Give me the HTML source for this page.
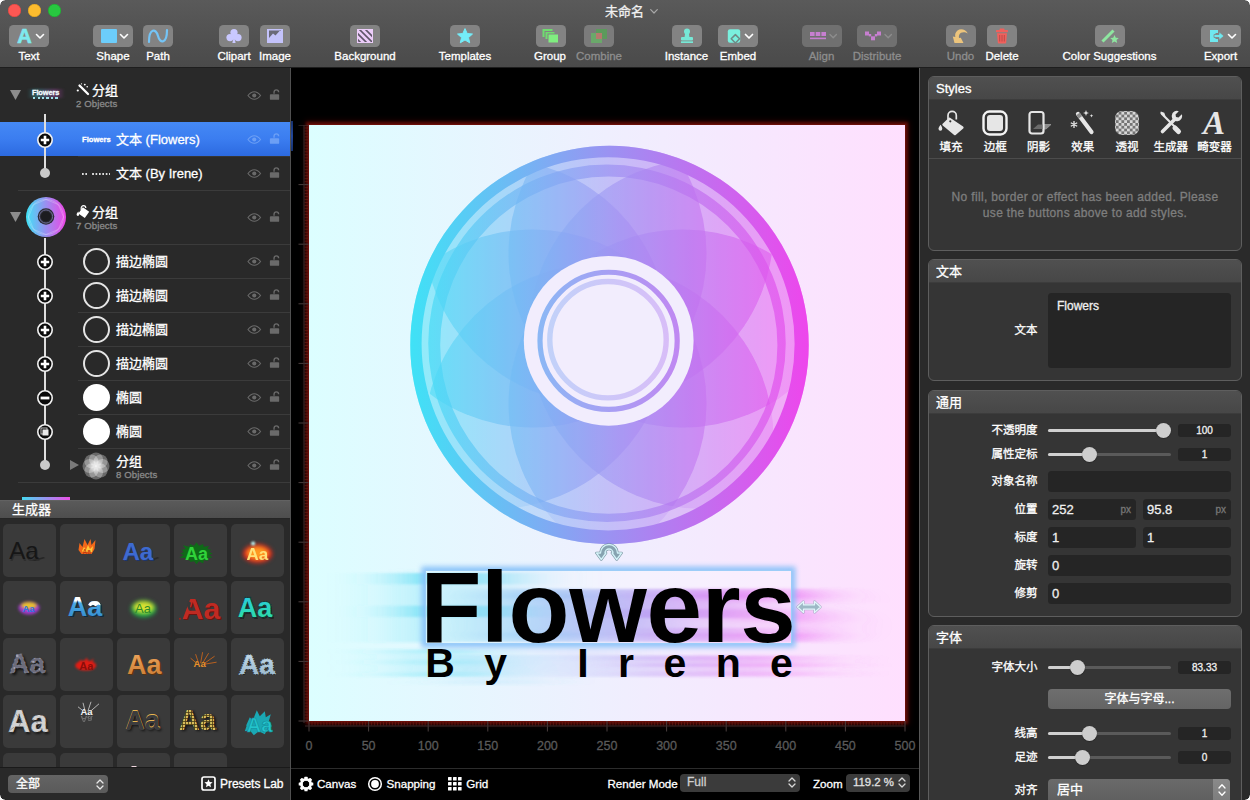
<!DOCTYPE html>
<html lang="zh">
<head>
<meta charset="utf-8">
<title>未命名</title>
<style>
*{box-sizing:border-box;margin:0;padding:0}
html,body{width:1250px;height:800px;overflow:hidden;background:#2a2a2a}
body{font-family:"Liberation Sans","Noto Sans CJK SC",sans-serif;color:#fff;font-size:12px;position:relative;-webkit-font-smoothing:antialiased;-webkit-text-stroke-width:.3px}
.abs{position:absolute}
/* ---------- toolbar ---------- */
#tb{position:absolute;left:0;top:0;width:1250px;height:68px;background:linear-gradient(#5a5a5a,#545454 35%,#4a4a4a);border-bottom:1px solid #1e1e1e}
.tl{position:absolute;top:4.400px;width:13px;height:13px;border-radius:50%}.cnr{position:absolute;width:5px;height:5px;z-index:50}
#title{position:absolute;left:605px;top:3px;font-size:13px;color:#f0f0f0;line-height:18px;white-space:nowrap}
.tbtn{position:absolute;top:25px;height:22px;border-radius:4.500px;background:#838383}
.tlab{position:absolute;top:49px;width:120px;margin-left:-60px;text-align:center;font-size:11.5px;line-height:14px;color:#fff;white-space:nowrap}
.tlab.dim{color:#8e8e8e}
.tbtn.dim{background:#707070}
/* ---------- left ---------- */
#left{position:absolute;left:0;top:68px;width:290px;height:732px;background:#292929;overflow:hidden}
#lsep{position:absolute;left:290px;top:68px;width:1px;height:732px;background:#505050}
/* ---------- canvas ---------- */
#cv{position:absolute;left:291px;top:68px;width:628px;height:732px;background:#000;overflow:hidden}
#rsep{position:absolute;left:919px;top:68px;width:1px;height:732px;background:#585858}
/* ---------- right ---------- */
#right{position:absolute;left:920px;top:68px;width:330px;height:732px;background:#2a2a2a;overflow:hidden}
.panel{position:absolute;left:8px;width:314px;background:#353535;border:1px solid #5e5e5e;border-radius:6px;overflow:hidden}
.phead{position:absolute;left:0;top:0;right:0;height:23px;background:linear-gradient(#505050,#474747);border-bottom:1px solid #3c3c3c;padding-left:7px;font-size:13px;line-height:23px;color:#fff}
</style>
</head>
<body>
<div id="tb">
  <div class="tl" style="left:7.500px;background:#fc5753;box-shadow:inset 0 0 0 .5px #d9463f"></div>
  <div class="tl" style="left:27.500px;background:#fdbc2e;box-shadow:inset 0 0 0 .5px #d99e20"></div>
  <div class="tl" style="left:47.500px;background:#28c840;box-shadow:inset 0 0 0 .5px #1ea530"></div>
  <div id="title">未命名</div><svg class="abs" style="left:649.500px;top:8.500px" width="8" height="5" viewBox="0 0 8 5"><path d="M.7.7l3.300 3.300 3.300-3.300" fill="none" stroke="#a8a8a8" stroke-width="1.200" stroke-linecap="round" stroke-linejoin="round"/></svg>
  <!-- Text -->
  <div class="tbtn" style="left:9px;width:40px">
    <svg class="abs" style="left:0;top:0" width="40" height="22" viewBox="0 0 40 22"><text x="15.500" y="18.300" text-anchor="middle" font-family="Liberation Sans,sans-serif" font-weight="bold" font-size="20" fill="#7ee9ef" stroke="#7ee9ef" stroke-width=".7">A</text><path d="M27.5 9.5l3.5 3.5 3.5-3.5" fill="none" stroke="#fff" stroke-width="1.6" stroke-linecap="round" stroke-linejoin="round"/></svg>
  </div>
  <div class="tlab" style="left:29px">Text</div>
  <!-- Shape -->
  <div class="tbtn" style="left:93px;width:40px">
    <svg class="abs" style="left:0;top:0" width="40" height="22" viewBox="0 0 40 22"><rect x="8" y="4" width="16" height="14" rx="1" fill="#6ccdfb"/><path d="M27.5 9.5l3.5 3.5 3.5-3.5" fill="none" stroke="#fff" stroke-width="1.6" stroke-linecap="round" stroke-linejoin="round"/></svg>
  </div>
  <div class="tlab" style="left:113px">Shape</div>
  <!-- Path -->
  <div class="tbtn" style="left:143px;width:30px">
    <svg class="abs" style="left:0;top:0" width="30" height="22" viewBox="0 0 30 22"><path d="M6 17C6 3 13 3 15 11S24 19 24 5" fill="none" stroke="#74c4f6" stroke-width="2.2" stroke-linecap="round"/></svg>
  </div>
  <div class="tlab" style="left:158px">Path</div>
  <!-- Clipart -->
  <div class="tbtn" style="left:219px;width:30px">
    <svg class="abs" style="left:0;top:0" width="30" height="22" viewBox="0 0 30 22"><g fill="#c9c8ff"><circle cx="15" cy="7.6" r="3.6"/><circle cx="11" cy="12.6" r="3.6"/><circle cx="19" cy="12.6" r="3.6"/><path d="M15 10l1.6 8h-3.2z"/><rect x="13" y="9" width="4" height="5"/></g></svg>
  </div>
  <div class="tlab" style="left:234px">Clipart</div>
  <!-- Image -->
  <div class="tbtn" style="left:260px;width:30px">
    <svg class="abs" style="left:0;top:0" width="30" height="22" viewBox="0 0 30 22"><rect x="7" y="4" width="16" height="14" fill="#c4c3fb"/><path d="M9 13l4-4.5 2.5 2 4-4.5 1.5 0v-.5h-12z" fill="#6a6a78"/></svg>
  </div>
  <div class="tlab" style="left:275px">Image</div>
  <!-- Background -->
  <div class="tbtn" style="left:350px;width:30px">
    <svg class="abs" style="left:0;top:0" width="30" height="22" viewBox="0 0 30 22"><defs><clipPath id="bgc"><rect x="8" y="5" width="14" height="12"/></clipPath></defs><rect x="7" y="4" width="16" height="14" fill="#eccdf9"/><g clip-path="url(#bgc)" stroke="#5e5568" stroke-width="1.6"><path d="M4 5l14 14M8 3l14 14M12 1l14 14M0 7l14 14"/></g></svg>
  </div>
  <div class="tlab" style="left:365px">Background</div>
  <!-- Templates -->
  <div class="tbtn" style="left:450px;width:30px">
    <svg class="abs" style="left:0;top:0" width="30" height="22" viewBox="0 0 30 22"><path d="M15 3.6l2.2 4.9 5.3.5-4 3.6 1.2 5.2-4.7-2.8-4.7 2.8 1.2-5.2-4-3.6 5.3-.5z" fill="#74ecf8" stroke="#74ecf8" stroke-width="1" stroke-linejoin="round"/></svg>
  </div>
  <div class="tlab" style="left:465px">Templates</div>
  <!-- Group -->
  <div class="tbtn" style="left:536px;width:30px">
    <svg class="abs" style="left:0;top:0" width="30" height="22" viewBox="0 0 30 22"><rect x="6.5" y="4" width="10" height="8" fill="#6fdc6f"/><rect x="9" y="6.5" width="10" height="8" fill="#6fdc6f" stroke="#838383" stroke-width="1"/><rect x="12" y="9" width="10.5" height="9" fill="#80ee80" stroke="#838383" stroke-width="1"/></svg>
  </div>
  <div class="tlab" style="left:550px">Group</div>
  <!-- Combine -->
  <div class="tbtn dim" style="left:584px;width:30px;background:#7b7b7b">
    <svg class="abs" style="left:0;top:0" width="30" height="22" viewBox="0 0 30 22"><rect x="12" y="4" width="11" height="10" fill="#5c9a5c"/><rect x="7" y="8" width="11" height="10" fill="#6aa86a"/><rect x="12" y="8" width="6" height="6" fill="#b47a6e"/></svg>
  </div>
  <div class="tlab dim" style="left:599px">Combine</div>
  <!-- Instance -->
  <div class="tbtn" style="left:672px;width:30px">
    <svg class="abs" style="left:0;top:0" width="30" height="22" viewBox="0 0 30 22"><g fill="#76e8d6"><circle cx="15" cy="6.5" r="3"/><path d="M13.3 7h3.4l.8 5.5h-5z"/><rect x="9" y="12" width="12" height="3.4" rx="1"/><rect x="9" y="16.3" width="12" height="1.7"/></g></svg>
  </div>
  <div class="tlab" style="left:686.5px">Instance</div>
  <!-- Embed -->
  <div class="tbtn" style="left:718px;width:40px">
    <svg class="abs" style="left:0;top:0" width="40" height="22" viewBox="0 0 40 22"><rect x="9.800" y="4.200" width="12.400" height="13.600" rx="2.200" fill="#7af0de"/><path d="M17.400 9.600l4.200 4.200-4.200 4.200-4.200-4.200z" fill="#7af0de" stroke="#6f8a86" stroke-width="1.500" stroke-linejoin="round"/><path d="M27.500 9.500l3.500 3.500 3.500-3.500" fill="none" stroke="#fff" stroke-width="1.700" stroke-linecap="round" stroke-linejoin="round"/></svg>
  </div>
  <div class="tlab" style="left:738px">Embed</div>
  <!-- Align -->
  <div class="tbtn dim" style="left:802px;width:40px">
    <svg class="abs" style="left:0;top:0" width="40" height="22" viewBox="0 0 40 22"><g fill="#c77fd0"><rect x="8" y="7" width="4.6" height="4"/><rect x="13.7" y="7" width="4.6" height="4"/><rect x="19.4" y="7" width="4.6" height="4"/><rect x="8" y="12.6" width="16" height="1.6"/></g><path d="M28 9.5l3.2 3.2 3.2-3.2" fill="none" stroke="#8d8d8d" stroke-width="1.4" stroke-linecap="round" stroke-linejoin="round"/></svg>
  </div>
  <div class="tlab dim" style="left:821.5px">Align</div>
  <!-- Distribute -->
  <div class="tbtn dim" style="left:857px;width:40px">
    <svg class="abs" style="left:0;top:0" width="40" height="22" viewBox="0 0 40 22"><g fill="#c77fd0"><rect x="8" y="6.5" width="4" height="4"/><rect x="11.8" y="9" width="2.4" height="2.4"/><rect x="14" y="11.3" width="4" height="4"/><rect x="17.8" y="9" width="2.4" height="2.4"/><rect x="20" y="6.5" width="4" height="4"/></g><path d="M28 9.5l3.2 3.2 3.2-3.2" fill="none" stroke="#8d8d8d" stroke-width="1.4" stroke-linecap="round" stroke-linejoin="round"/></svg>
  </div>
  <div class="tlab dim" style="left:877px">Distribute</div>
  <!-- Undo -->
  <div class="tbtn" style="left:946px;width:30px;background:#7e7e7e">
    <svg class="abs" style="left:0;top:0" width="30" height="22" viewBox="0 0 30 22"><path d="M21.800 8.400C19.500 4.200 14.500 3.200 11.500 5.500C9.300 7.200 8.800 9.800 9.300 12L6.800 11.600L8.500 18H17.500L14.800 12.800L13 13C12.600 10.800 13.200 8.800 15 7.800C17.200 6.600 19.800 7.200 21.800 8.400Z" fill="#ecc47c"/></svg>
  </div>
  <div class="tlab dim" style="left:960.5px">Undo</div>
  <!-- Delete -->
  <div class="tbtn" style="left:987px;width:30px">
    <svg class="abs" style="left:0;top:0" width="30" height="22" viewBox="0 0 30 22"><g fill="#f0605c"><rect x="12.5" y="3.6" width="5" height="2" rx=".8"/><rect x="9" y="5" width="12" height="2.2" rx=".6"/><path d="M10 8.200h10l-.8 9.300a1 1 0 0 1-1 .9h-6.400a1 1 0 0 1-1-.9z"/></g><g stroke="#b44845" stroke-width=".9"><path d="M12.700 10v6.500M15 10v6.500M17.300 10v6.500"/></g></svg>
  </div>
  <div class="tlab" style="left:1002px">Delete</div>
  <!-- Color Suggestions -->
  <div class="tbtn" style="left:1095px;width:30px">
    <svg class="abs" style="left:0;top:0" width="30" height="22" viewBox="0 0 30 22"><path d="M7.500 16.500l11-11" stroke="#8ee6a0" stroke-width="3" stroke-linecap="butt"/><path d="M19.500 10l1.300 2.800 3 .3-2.300 2 .7 3-2.700-1.600-2.700 1.600.7-3-2.300-2 3-.3z" fill="#8ee6a0"/></svg>
  </div>
  <div class="tlab" style="left:1109.5px">Color Suggestions</div>
  <!-- Export -->
  <div class="tbtn" style="left:1201px;width:40px">
    <svg class="abs" style="left:0;top:0" width="40" height="22" viewBox="0 0 40 22"><path d="M9 5h8v3h-2.500v6h2.500v3h-8z" fill="#6fe7ee"/><path d="M13 9.500h5v-2.800l5 4.300-5 4.300v-2.800h-5z" fill="#6fe7ee" stroke="#838383" stroke-width=".8"/><path d="M27.500 9.500l3.500 3.500 3.500-3.500" fill="none" stroke="#fff" stroke-width="1.600" stroke-linecap="round" stroke-linejoin="round"/></svg>
  </div>
  <div class="tlab" style="left:1220.5px">Export</div>
</div>
<div id="left">
<style>
.sepl{position:absolute;height:1px;background:#3b3b3b;right:0}
.rt{position:absolute;left:116px;margin-top:1px;font-size:13px;line-height:16px;color:#fff;white-space:nowrap}
.gt{position:absolute;left:92px;margin-top:.700px;font-size:13px;line-height:16px;color:#fff;white-space:nowrap}
.sub{position:absolute;font-size:9.600px;line-height:11px;color:#8a8a8a;white-space:nowrap;letter-spacing:.100px}
.vline{position:absolute;left:44px;width:1.600px;background:#dedede}
.pc{position:absolute;width:52.500px;height:52.500px;border-radius:5px;background:#3a3a3a;overflow:hidden}
.pc svg{position:absolute;left:0;top:0}
</style>
<div class="abs" style="left:0;top:54px;width:290px;height:34px;background:linear-gradient(#4589f5,#3b7df0 50%,#2c6ae0)"></div>
<div class="sepl" style="left:18px;top:122px"></div>
<div class="sepl" style="left:78px;top:176px"></div>
<div class="sepl" style="left:78px;top:210px"></div>
<div class="sepl" style="left:78px;top:244px"></div>
<div class="sepl" style="left:78px;top:278px"></div>
<div class="sepl" style="left:78px;top:312px"></div>
<div class="sepl" style="left:78px;top:346px"></div>
<div class="sepl" style="left:78px;top:380px"></div>
<div class="sepl" style="left:18px;top:414px"></div>
<div class="sepl" style="left:78px;top:88px;background:#353535"></div>
<div class="vline" style="top:46px;height:59px"></div>
<div class="vline" style="top:170px;height:227px"></div>
<svg class="abs" style="left:36px;top:63px" width="18" height="18" viewBox="0 0 18 18"><circle cx="9" cy="9" r="7.200" fill="#0a0a0a" stroke="#f2f2f2" stroke-width="1.600"/><path d="M9 4.800v8.400M4.800 9h8.400" stroke="#fff" stroke-width="2.600"/></svg>
<svg class="abs" style="left:36px;top:96px" width="18" height="18" viewBox="0 0 18 18"><circle cx="9" cy="9" r="5" fill="#c9c9c9"/></svg>
<svg class="abs" style="left:36px;top:185px" width="18" height="18" viewBox="0 0 18 18"><circle cx="9" cy="9" r="7.200" fill="#0a0a0a" stroke="#f2f2f2" stroke-width="1.600"/><path d="M9 4.800v8.400M4.800 9h8.400" stroke="#fff" stroke-width="2.600"/></svg>
<svg class="abs" style="left:36px;top:219px" width="18" height="18" viewBox="0 0 18 18"><circle cx="9" cy="9" r="7.200" fill="#0a0a0a" stroke="#f2f2f2" stroke-width="1.600"/><path d="M9 4.800v8.400M4.800 9h8.400" stroke="#fff" stroke-width="2.600"/></svg>
<svg class="abs" style="left:36px;top:253px" width="18" height="18" viewBox="0 0 18 18"><circle cx="9" cy="9" r="7.200" fill="#0a0a0a" stroke="#f2f2f2" stroke-width="1.600"/><path d="M9 4.800v8.400M4.800 9h8.400" stroke="#fff" stroke-width="2.600"/></svg>
<svg class="abs" style="left:36px;top:287px" width="18" height="18" viewBox="0 0 18 18"><circle cx="9" cy="9" r="7.200" fill="#0a0a0a" stroke="#f2f2f2" stroke-width="1.600"/><path d="M9 4.800v8.400M4.800 9h8.400" stroke="#fff" stroke-width="2.600"/></svg>
<svg class="abs" style="left:36px;top:321px" width="18" height="18" viewBox="0 0 18 18"><circle cx="9" cy="9" r="7.200" fill="#0a0a0a" stroke="#f2f2f2" stroke-width="1.600"/><path d="M4.600 9h8.800" stroke="#fff" stroke-width="2.800"/></svg>
<svg class="abs" style="left:36px;top:355px" width="18" height="18" viewBox="0 0 18 18"><circle cx="9" cy="9" r="7.200" fill="#0a0a0a" stroke="#f2f2f2" stroke-width="1.600"/><rect x="5" y="5" width="6" height="6" fill="none" stroke="#bbb" stroke-width="1"/><rect x="6.500" y="6.500" width="6" height="6" fill="#e8e8e8"/></svg>
<svg class="abs" style="left:36px;top:388px" width="18" height="18" viewBox="0 0 18 18"><circle cx="9" cy="9" r="5" fill="#c9c9c9"/></svg>
<svg class="abs" style="left:9.5px;top:22px" width="11" height="10" viewBox="0 0 11 10"><path d="M0 0h11L5.500 10z" fill="#8c8c8c"/></svg>
<svg class="abs" style="left:9.5px;top:144px" width="11" height="10" viewBox="0 0 11 10"><path d="M0 0h11L5.500 10z" fill="#8c8c8c"/></svg>
<svg class="abs" style="left:70px;top:392px" width="9" height="10" viewBox="0 0 9 10"><path d="M0 0v10L9 5z" fill="#7a7a7a"/></svg>
<div class="abs" style="left:27px;top:21px;width:38px;height:9px;background:linear-gradient(90deg,rgba(60,200,210,0),rgba(60,200,210,.35) 25%,rgba(200,80,200,.35) 75%,rgba(200,80,200,0));filter:blur(1px)"></div>
<div class="abs" style="left:32px;top:20.5px;font-size:7.400px;line-height:8px;font-weight:bold;color:#f4fbff;letter-spacing:-.100px">Flowers</div>
<div class="abs" style="left:33px;top:29px;width:26px;height:1.500px;background:repeating-linear-gradient(90deg,#9fe0ea 0 2px,transparent 2px 4.500px)"></div>
<svg class="abs" style="left:76px;top:15px" width="14" height="14" viewBox="0 0 14 14"><path d="M3.500 2.500l8.500 8.500" stroke="#fff" stroke-width="2.300" stroke-linecap="round"/><circle cx="1.800" cy="7.500" r="1.100" fill="#fff"/><circle cx="8.800" cy="1.600" r=".9" fill="#fff"/><circle cx="11.200" cy="3.800" r=".8" fill="#fff"/><circle cx="5.500" cy="0.800" r=".6" fill="#fff"/></svg>
<div class="gt" style="top:14px">分组</div>
<div class="sub" style="left:76px;top:29.7px">2 Objects</div>
<svg class="abs" style="left:247px;top:22.5px" width="14.500" height="9" viewBox="0 0 16 10"><path d="M1 5C3.500 1.700 5.700 .800 8 .800S12.500 1.700 15 5C12.500 8.300 10.300 9.200 8 9.200S3.500 8.300 1 5z" fill="none" stroke="#6a6a6a" stroke-width="1.200"/><circle cx="8" cy="5" r="2.300" fill="#6a6a6a"/></svg>
<svg class="abs" style="left:268.5px;top:21.0px" width="11.500" height="11.500" viewBox="0 0 13 13"><path d="M3.500 6V4.200a2.600 2.600 0 0 1 5.200 0" fill="none" stroke="#6a6a6a" stroke-width="1.500" transform="translate(2.200 -0.600)"/><rect x="1" y="5.800" width="10.500" height="6.400" rx="1" fill="#6a6a6a"/></svg>
<div class="abs" style="left:82px;top:66.5px;font-size:7.600px;line-height:9px;font-weight:bold;color:#fff">Flowers</div>
<div class="rt" style="top:63px">文本 (Flowers)</div>
<svg class="abs" style="left:247px;top:66.5px" width="14.500" height="9" viewBox="0 0 16 10"><path d="M1 5C3.500 1.700 5.700 .800 8 .800S12.500 1.700 15 5C12.500 8.300 10.300 9.200 8 9.200S3.500 8.300 1 5z" fill="none" stroke="#6c9ff5" stroke-width="1.200"/><circle cx="8" cy="5" r="2.300" fill="#6c9ff5"/></svg>
<svg class="abs" style="left:268.5px;top:65.0px" width="11.500" height="11.500" viewBox="0 0 13 13"><path d="M3.500 6V4.200a2.600 2.600 0 0 1 5.200 0" fill="none" stroke="#6c9ff5" stroke-width="1.500" transform="translate(2.200 -0.600)"/><rect x="1" y="5.800" width="10.500" height="6.400" rx="1" fill="#6c9ff5"/></svg>
<div class="abs" style="left:82px;top:104.5px;width:28px;height:2px;background:radial-gradient(circle at 1px 1px,#ddd 0 .8px,transparent 1px) 0 0/3.400px 2px repeat-x"></div>
<div class="abs" style="left:87.500px;top:104px;width:4.500px;height:3px;background:#292929"></div>
<div class="rt" style="top:97px">文本 (By Irene)</div>
<svg class="abs" style="left:247px;top:100.5px" width="14.500" height="9" viewBox="0 0 16 10"><path d="M1 5C3.500 1.700 5.700 .800 8 .800S12.500 1.700 15 5C12.500 8.300 10.300 9.200 8 9.200S3.500 8.300 1 5z" fill="none" stroke="#6a6a6a" stroke-width="1.200"/><circle cx="8" cy="5" r="2.300" fill="#6a6a6a"/></svg>
<svg class="abs" style="left:268.5px;top:99.0px" width="11.500" height="11.500" viewBox="0 0 13 13"><path d="M3.500 6V4.200a2.600 2.600 0 0 1 5.200 0" fill="none" stroke="#6a6a6a" stroke-width="1.500" transform="translate(2.200 -0.600)"/><rect x="1" y="5.800" width="10.500" height="6.400" rx="1" fill="#6a6a6a"/></svg>
<svg class="abs" style="left:25px;top:128px" width="42" height="42" viewBox="0 0 42 42"><defs><linearGradient id="tg" x1="0" x2="1"><stop offset="0" stop-color="#3fe3f6"/><stop offset=".5" stop-color="#9a8ff0"/><stop offset="1" stop-color="#ee45e6"/></linearGradient></defs><circle cx="21" cy="21" r="20" fill="url(#tg)"/><g fill="none" stroke="rgba(255,255,255,.22)" stroke-width="1"><circle cx="21" cy="21" r="17.500"/><path d="M21 3.500L33.400 8.600 38.500 21 33.400 33.400 21 38.500 8.600 33.400 3.500 21 8.600 8.600z"/></g><circle cx="21" cy="20.500" r="8.300" fill="#2a2a33"/><circle cx="21" cy="20.500" r="6.600" fill="none" stroke="#70709a" stroke-width="1"/><circle cx="21" cy="20.500" r="5" fill="#1c1c20"/></svg>
<svg class="abs" style="left:76px;top:136px" width="15" height="15" viewBox="0 0 15 15"><path d="M5.200 6V4a2.300 2.300 0 0 1 4.600 0" fill="none" stroke="#fff" stroke-width="1.200"/><path d="M6.800 3.200l6.400 4.600-4.400 6.200-6.400-4.600z" fill="#fff"/><path d="M2.300 7.600c-1.200 1.400-1.700 2.300-1.700 3a1.300 1.300 0 0 0 2.600 0c0-.7-.3-1.700-.9-3z" fill="#fff"/></svg>
<div class="gt" style="top:136px">分组</div>
<div class="sub" style="left:76px;top:151.7px">7 Objects</div>
<svg class="abs" style="left:247px;top:144.5px" width="14.500" height="9" viewBox="0 0 16 10"><path d="M1 5C3.500 1.700 5.700 .800 8 .800S12.500 1.700 15 5C12.500 8.300 10.300 9.200 8 9.200S3.500 8.300 1 5z" fill="none" stroke="#6a6a6a" stroke-width="1.200"/><circle cx="8" cy="5" r="2.300" fill="#6a6a6a"/></svg>
<svg class="abs" style="left:268.5px;top:143.0px" width="11.500" height="11.500" viewBox="0 0 13 13"><path d="M3.500 6V4.200a2.600 2.600 0 0 1 5.200 0" fill="none" stroke="#6a6a6a" stroke-width="1.500" transform="translate(2.200 -0.600)"/><rect x="1" y="5.800" width="10.500" height="6.400" rx="1" fill="#6a6a6a"/></svg>
<div class="abs" style="left:82.500px;top:180px;width:27px;height:27px;border-radius:50%;border:2px solid #e4e4e4"></div>
<div class="rt" style="top:185px">描边椭圆</div>
<svg class="abs" style="left:247px;top:188.5px" width="14.500" height="9" viewBox="0 0 16 10"><path d="M1 5C3.500 1.700 5.700 .800 8 .800S12.500 1.700 15 5C12.500 8.300 10.300 9.200 8 9.200S3.500 8.300 1 5z" fill="none" stroke="#6a6a6a" stroke-width="1.200"/><circle cx="8" cy="5" r="2.300" fill="#6a6a6a"/></svg>
<svg class="abs" style="left:268.5px;top:187.0px" width="11.500" height="11.500" viewBox="0 0 13 13"><path d="M3.500 6V4.200a2.600 2.600 0 0 1 5.200 0" fill="none" stroke="#6a6a6a" stroke-width="1.500" transform="translate(2.200 -0.600)"/><rect x="1" y="5.800" width="10.500" height="6.400" rx="1" fill="#6a6a6a"/></svg>
<div class="abs" style="left:82.500px;top:214px;width:27px;height:27px;border-radius:50%;border:2px solid #e4e4e4"></div>
<div class="rt" style="top:219px">描边椭圆</div>
<svg class="abs" style="left:247px;top:222.5px" width="14.500" height="9" viewBox="0 0 16 10"><path d="M1 5C3.500 1.700 5.700 .800 8 .800S12.500 1.700 15 5C12.500 8.300 10.300 9.200 8 9.200S3.500 8.300 1 5z" fill="none" stroke="#6a6a6a" stroke-width="1.200"/><circle cx="8" cy="5" r="2.300" fill="#6a6a6a"/></svg>
<svg class="abs" style="left:268.5px;top:221.0px" width="11.500" height="11.500" viewBox="0 0 13 13"><path d="M3.500 6V4.200a2.600 2.600 0 0 1 5.200 0" fill="none" stroke="#6a6a6a" stroke-width="1.500" transform="translate(2.200 -0.600)"/><rect x="1" y="5.800" width="10.500" height="6.400" rx="1" fill="#6a6a6a"/></svg>
<div class="abs" style="left:82.500px;top:248px;width:27px;height:27px;border-radius:50%;border:2px solid #e4e4e4"></div>
<div class="rt" style="top:253px">描边椭圆</div>
<svg class="abs" style="left:247px;top:256.5px" width="14.500" height="9" viewBox="0 0 16 10"><path d="M1 5C3.500 1.700 5.700 .800 8 .800S12.500 1.700 15 5C12.500 8.300 10.300 9.200 8 9.200S3.500 8.300 1 5z" fill="none" stroke="#6a6a6a" stroke-width="1.200"/><circle cx="8" cy="5" r="2.300" fill="#6a6a6a"/></svg>
<svg class="abs" style="left:268.5px;top:255.0px" width="11.500" height="11.500" viewBox="0 0 13 13"><path d="M3.500 6V4.200a2.600 2.600 0 0 1 5.200 0" fill="none" stroke="#6a6a6a" stroke-width="1.500" transform="translate(2.200 -0.600)"/><rect x="1" y="5.800" width="10.500" height="6.400" rx="1" fill="#6a6a6a"/></svg>
<div class="abs" style="left:82.500px;top:282px;width:27px;height:27px;border-radius:50%;border:2px solid #e4e4e4"></div>
<div class="rt" style="top:287px">描边椭圆</div>
<svg class="abs" style="left:247px;top:290.5px" width="14.500" height="9" viewBox="0 0 16 10"><path d="M1 5C3.500 1.700 5.700 .800 8 .800S12.500 1.700 15 5C12.500 8.300 10.300 9.200 8 9.200S3.500 8.300 1 5z" fill="none" stroke="#6a6a6a" stroke-width="1.200"/><circle cx="8" cy="5" r="2.300" fill="#6a6a6a"/></svg>
<svg class="abs" style="left:268.5px;top:289.0px" width="11.500" height="11.500" viewBox="0 0 13 13"><path d="M3.500 6V4.200a2.600 2.600 0 0 1 5.200 0" fill="none" stroke="#6a6a6a" stroke-width="1.500" transform="translate(2.200 -0.600)"/><rect x="1" y="5.800" width="10.500" height="6.400" rx="1" fill="#6a6a6a"/></svg>
<div class="abs" style="left:82.500px;top:316px;width:27px;height:27px;border-radius:50%;background:#fff"></div>
<div class="rt" style="top:321px">椭圆</div>
<svg class="abs" style="left:247px;top:324.5px" width="14.500" height="9" viewBox="0 0 16 10"><path d="M1 5C3.500 1.700 5.700 .800 8 .800S12.500 1.700 15 5C12.500 8.300 10.300 9.200 8 9.200S3.500 8.300 1 5z" fill="none" stroke="#6a6a6a" stroke-width="1.200"/><circle cx="8" cy="5" r="2.300" fill="#6a6a6a"/></svg>
<svg class="abs" style="left:268.5px;top:323.0px" width="11.500" height="11.500" viewBox="0 0 13 13"><path d="M3.500 6V4.200a2.600 2.600 0 0 1 5.200 0" fill="none" stroke="#6a6a6a" stroke-width="1.500" transform="translate(2.200 -0.600)"/><rect x="1" y="5.800" width="10.500" height="6.400" rx="1" fill="#6a6a6a"/></svg>
<div class="abs" style="left:82.500px;top:350px;width:27px;height:27px;border-radius:50%;background:#fff"></div>
<div class="rt" style="top:355px">椭圆</div>
<svg class="abs" style="left:247px;top:358.5px" width="14.500" height="9" viewBox="0 0 16 10"><path d="M1 5C3.500 1.700 5.700 .800 8 .800S12.500 1.700 15 5C12.500 8.300 10.300 9.200 8 9.200S3.500 8.300 1 5z" fill="none" stroke="#6a6a6a" stroke-width="1.200"/><circle cx="8" cy="5" r="2.300" fill="#6a6a6a"/></svg>
<svg class="abs" style="left:268.5px;top:357.0px" width="11.500" height="11.500" viewBox="0 0 13 13"><path d="M3.500 6V4.200a2.600 2.600 0 0 1 5.200 0" fill="none" stroke="#6a6a6a" stroke-width="1.500" transform="translate(2.200 -0.600)"/><rect x="1" y="5.800" width="10.500" height="6.400" rx="1" fill="#6a6a6a"/></svg>
<svg class="abs" style="left:82px;top:383.5px;filter:blur(.3px)" width="28" height="28" viewBox="-14 -14 28 28"><circle cx="6.50" cy="0.00" r="7" fill="rgba(255,255,255,.3)"/><circle cx="4.60" cy="4.60" r="7" fill="rgba(255,255,255,.3)"/><circle cx="0.00" cy="6.50" r="7" fill="rgba(255,255,255,.3)"/><circle cx="-4.60" cy="4.60" r="7" fill="rgba(255,255,255,.3)"/><circle cx="-6.50" cy="0.00" r="7" fill="rgba(255,255,255,.3)"/><circle cx="-4.60" cy="-4.60" r="7" fill="rgba(255,255,255,.3)"/><circle cx="-0.00" cy="-6.50" r="7" fill="rgba(255,255,255,.3)"/><circle cx="4.60" cy="-4.60" r="7" fill="rgba(255,255,255,.3)"/><circle cx="0" cy="0" r="6" fill="rgba(255,255,255,.55)" style="filter:blur(1.500px)"/></svg>
<div class="rt" style="top:384.5px">分组</div>
<div class="sub" style="left:116px;top:400.5px">8 Objects</div>
<svg class="abs" style="left:247px;top:392.5px" width="14.500" height="9" viewBox="0 0 16 10"><path d="M1 5C3.500 1.700 5.700 .800 8 .800S12.500 1.700 15 5C12.500 8.300 10.300 9.200 8 9.200S3.500 8.300 1 5z" fill="none" stroke="#6a6a6a" stroke-width="1.200"/><circle cx="8" cy="5" r="2.300" fill="#6a6a6a"/></svg>
<svg class="abs" style="left:268.5px;top:391.0px" width="11.500" height="11.500" viewBox="0 0 13 13"><path d="M3.500 6V4.200a2.600 2.600 0 0 1 5.200 0" fill="none" stroke="#6a6a6a" stroke-width="1.500" transform="translate(2.200 -0.600)"/><rect x="1" y="5.800" width="10.500" height="6.400" rx="1" fill="#6a6a6a"/></svg>
<div class="abs" style="left:22px;top:429px;width:48px;height:3px;background:linear-gradient(90deg,#45d9f0,#a08cf0 55%,#ec4fe6)"></div>
<div class="abs" style="left:0;top:432px;width:290px;height:19px;background:linear-gradient(#5a5a5a,#4e4e4e);border-top:1px solid #626262;border-bottom:1px solid #262626;padding-left:12px;font-size:13px;line-height:18px;color:#fff">生成器</div>
<div class="abs" style="left:0;top:451px;width:290px;height:248px;background:#292929"></div>
<div class="pc" style="left:3px;top:456px;height:52.5px"><svg width="53" height="53" viewBox="0 0 53 53"><path d="M28.3 36.4l12-3.500 2 1-10 3z" fill="#252525"/><text x="7.3" y="36.6" font-size="24" font-family="Liberation Sans,sans-serif"  fill="#2c2c2c" opacity=".8">Aa</text><text x="6.3" y="35.4" font-size="24" font-family="Liberation Sans,sans-serif"  fill="#161616" >Aa</text></svg></div>
<div class="pc" style="left:60px;top:456px;height:52.5px"><svg width="53" height="53" viewBox="0 0 53 53"><g style="filter:blur(.6px)"><path d="M18.5 26l1-7 3 4 2-8 3 6 3-6 1 6 4-5-1 9-3 5h-10z" fill="#f2681a"/><path d="M22 27l2-4 2 3 2-5 2 4 3-3-1 6h-9z" fill="#ffc83a"/></g><text x="22.5" y="29.5" font-size="6.5" font-family="Liberation Sans,sans-serif" font-weight="bold" fill="#c23a10" >Aa</text></svg></div>
<div class="pc" style="left:117px;top:456px;height:52.5px"><svg width="53" height="53" viewBox="0 0 53 53"><path d="M31.5 36l9-3 2 1-8 3z" fill="#2a2a2a"/><text x="6.5" y="37.2" font-size="24" font-family="Liberation Sans,sans-serif" font-weight="bold" fill="#1d356e" >Aa</text><text x="5.5" y="36" font-size="24" font-family="Liberation Sans,sans-serif" font-weight="bold" fill="#3d6ad0" >Aa</text></svg></div>
<div class="pc" style="left:174px;top:456px;height:52.5px"><svg width="53" height="53" viewBox="0 0 53 53"><g style="filter:blur(.5px)"><path d="M38.6 29.5L35.3 31.1L38.6 33.5L33.3 33.9L34.3 36.7L29.7 36.2L29.3 39.4L25.0 37.3L22.5 40.3L20.0 37.3L16.6 38.1L15.3 36.2L11.8 36.0L11.7 33.9L5.3 33.8L9.7 31.1L6.3 29.5L9.7 27.9L7.6 25.8L11.7 25.1L8.9 21.2L15.3 22.8L16.0 19.9L20.0 21.7L22.5 18.2L25.0 21.7L29.1 19.9L29.7 22.8L35.1 21.9L33.3 25.1L37.1 25.8L35.3 27.9z" fill="#0f6a18"/></g><text x="11" y="35.5" font-size="18" font-family="Liberation Sans,sans-serif" font-weight="bold" fill="#30d23a" >Aa</text></svg></div>
<div class="pc" style="left:231px;top:456px;height:52.5px"><svg width="53" height="53" viewBox="0 0 53 53"><g style="filter:blur(2.2px)"><ellipse cx="26.6" cy="29.6" rx="14.500" ry="9.500" fill="#e8281a"/><ellipse cx="26.6" cy="29.1" rx="11" ry="6.500" fill="#ff9a20"/></g><g style="filter:blur(.5px)"><text x="15.6" y="35.6" font-size="17" font-family="Liberation Sans,sans-serif" font-weight="bold" fill="#ffe27a" >Aa</text></g><circle cx="22.1" cy="19.6" r="2" fill="#bff" style="filter:blur(1px)"/></svg></div>
<div class="pc" style="left:3px;top:513px;height:52.5px"><svg width="53" height="53" viewBox="0 0 53 53"><g style="filter:blur(1.6px)"><ellipse cx="26" cy="27" rx="10.500" ry="6.500" fill="#a43ad0"/><ellipse cx="26" cy="24.5" rx="8" ry="3.500" fill="#e8c030"/></g><text x="19.5" y="30.5" font-size="9.5" font-family="Liberation Sans,sans-serif" font-weight="bold" fill="#2a7ae0" >Aa</text></svg></div>
<div class="pc" style="left:60px;top:513px;height:52.5px"><svg width="53" height="53" viewBox="0 0 53 53"><defs><linearGradient id="sn" x1="0" y1="0" x2="0" y2="1"><stop offset="0" stop-color="#fff"/><stop offset=".28" stop-color="#fff"/><stop offset=".36" stop-color="#49a9e6"/><stop offset="1" stop-color="#2f86c8"/></linearGradient></defs><text x="8.9" y="36.3" font-size="27" font-family="Liberation Sans,sans-serif" font-weight="bold" fill="#0e2a44" >Aa</text><text x="7.7" y="35.3" font-size="27" font-family="Liberation Sans,sans-serif" font-weight="bold" fill="url(#sn)" >Aa</text><path d="M28.2 23.8c1-2.500 3.500-3.500 6.500-3.500s5.500 1.300 6 4l-2.500-.8-2.500 1.800-2.800-1.500-2.500 1.500z" fill="#fff"/></svg></div>
<div class="pc" style="left:117px;top:513px;height:52.5px"><svg width="53" height="53" viewBox="0 0 53 53"><g style="filter:blur(2.2px)"><ellipse cx="26.6" cy="27.8" rx="12.500" ry="8.500" fill="#18b04a"/><ellipse cx="26.6" cy="26.3" rx="10.500" ry="6" fill="#d8e030"/></g><text x="18.1" y="31.8" font-size="13" font-family="Liberation Sans,sans-serif"  fill="#2c8a2c" >Aa</text></svg></div>
<div class="pc" style="left:174px;top:513px;height:52.5px"><svg width="53" height="53" viewBox="0 0 53 53"><g style="filter:blur(.35px)"><text x="9" y="38.8" font-size="30" font-family="Liberation Sans,sans-serif" font-weight="bold" fill="#6e1410" >Aa</text><text x="8" y="38" font-size="30" font-family="Liberation Sans,sans-serif" font-weight="bold" fill="#c02a22" >Aa</text></g><circle cx="6" cy="37.8" r="1" fill="#a02018"/><path d="M14 19.8l3 2-1 4 3 3-4 1-2-5z" fill="#383838"/></svg></div>
<div class="pc" style="left:231px;top:513px;height:52.5px"><svg width="53" height="53" viewBox="0 0 53 53"><defs><linearGradient id="tl" x1="0" y1="0" x2="0" y2="1"><stop offset="0" stop-color="#28c8e8"/><stop offset="1" stop-color="#2fe09a"/></linearGradient></defs><text x="8.3" y="37.5" font-size="27" font-family="Liberation Sans,sans-serif" font-weight="bold" fill="#1a1a1a" opacity=".7">Aa</text><text x="6.8" y="36" font-size="27" font-family="Liberation Sans,sans-serif" font-weight="bold" fill="url(#tl)" stroke="#0b3f3f" stroke-width="2.400" stroke-dasharray="1.300 1.100" paint-order="stroke">Aa</text></svg></div>
<div class="pc" style="left:3px;top:570.4px;height:52.5px"><svg width="53" height="53" viewBox="0 0 53 53"><text x="8.3" y="36.5" font-size="28" font-family="Liberation Sans,sans-serif" font-weight="bold" fill="#141414" style="filter:blur(1px)">Aa</text><text x="6.3" y="35" font-size="28" font-family="Liberation Sans,sans-serif" font-weight="bold" fill="#6c6c7c" stroke="#9a9aa8" stroke-width=".6" stroke-dasharray="2 3">Aa</text><g fill="#b8b8c8" opacity=".7"><circle cx="14.3" cy="18" r="1.300"/><circle cx="11.3" cy="30" r="1"/><circle cx="30.3" cy="24" r="1.200"/><circle cx="36.3" cy="31" r="1"/></g></svg></div>
<div class="pc" style="left:60px;top:570.4px;height:52.5px"><svg width="53" height="53" viewBox="0 0 53 53"><g style="filter:blur(1.100px)"><ellipse cx="25.7" cy="27.6" rx="10.500" ry="5" fill="#e01c14"/><path d="M15.7 27.6l5-6 2 4 4-6 2 5 5-4-2 7z" fill="#e01c14"/></g><text x="19.2" y="31.6" font-size="11" font-family="Liberation Sans,sans-serif" font-weight="bold" fill="#8a0e0a" >Aa</text></svg></div>
<div class="pc" style="left:117px;top:570.4px;height:52.5px"><svg width="53" height="53" viewBox="0 0 53 53"><text x="11.2" y="37.4" font-size="27" font-family="Liberation Sans,sans-serif" font-weight="bold" fill="#5a3410" >Aa</text><defs><linearGradient id="og" x1="0" y1="0" x2="0" y2="1"><stop offset="0" stop-color="#f0a860"/><stop offset="1" stop-color="#c87830"/></linearGradient></defs><text x="10" y="36.2" font-size="27" font-family="Liberation Sans,sans-serif" font-weight="bold" fill="url(#og)" >Aa</text></svg></div>
<div class="pc" style="left:174px;top:570.4px;height:52.5px"><svg width="53" height="53" viewBox="0 0 53 53"><g stroke="#d86a18" stroke-width=".8" style="filter:blur(.3px)"><path d="M24.6 25.2l-3-9M26.6 25.2l2-11M28.6 25.2l6-10M30.6 25.2l10-7M30.6 26.2l12-2M22.6 25.2l-6-5"/></g><text x="19.6" y="29.2" font-size="9.5" font-family="Liberation Sans,sans-serif" font-weight="bold" fill="#e8902a" >Aa</text></svg></div>
<div class="pc" style="left:231px;top:570.4px;height:52.5px"><svg width="53" height="53" viewBox="0 0 53 53"><defs><linearGradient id="ig" x1="0" y1="0" x2="0" y2="1"><stop offset="0" stop-color="#cfe2ee"/><stop offset="1" stop-color="#8fb0c8"/></linearGradient></defs><text x="9" y="37.2" font-size="28" font-family="Liberation Sans,sans-serif" font-weight="bold" fill="#222" >Aa</text><text x="8" y="36.2" font-size="28" font-family="Liberation Sans,sans-serif" font-weight="bold" fill="url(#ig)" stroke="#a8c6da" stroke-width="1.600" stroke-dasharray=".8 1.600">Aa</text></svg></div>
<div class="pc" style="left:3px;top:627.4px;height:52.5px"><svg width="53" height="53" viewBox="0 0 53 53"><text x="6.5" y="38.7" font-size="31" font-family="Liberation Sans,sans-serif" font-weight="bold" fill="#181818" style="filter:blur(.8px)">Aa</text><text x="5" y="37.2" font-size="31" font-family="Liberation Sans,sans-serif" font-weight="bold" fill="#d2d2d2" stroke="#7a7a7a" stroke-width=".7" stroke-dasharray="1.500 2.500">Aa</text><g stroke="#6c6c6c" stroke-width=".7" opacity=".8"><path d="M13 19.2l4 5M19 25.2l-3 6M30 25.2l5 3M35 32.2l3-4M11 32.2l-4 3"/></g></svg></div>
<div class="pc" style="left:60px;top:627.4px;height:52.5px"><svg width="53" height="53" viewBox="0 0 53 53"><g stroke="#e8e8e8" stroke-width=".7"><path d="M25 15.8l-2-8M28 15.8l3-9M31 15.8l8-7M23 15.8l-5-4"/></g><text x="20.5" y="19.8" font-size="9.5" font-family="Liberation Sans,sans-serif" font-weight="bold" fill="#f4f4f4" >Aa</text><g transform="translate(0 40.6) scale(1 -1)" opacity=".28"><text x="20.5" y="19.8" font-size="9.5" font-family="Liberation Sans,sans-serif" font-weight="bold" fill="#f4f4f4" >Aa</text></g></svg></div>
<div class="pc" style="left:117px;top:627.4px;height:52.5px"><svg width="53" height="53" viewBox="0 0 53 53"><text x="9.8" y="36.4" font-size="27" font-family="Liberation Sans,sans-serif" font-weight="bold" fill="#161616" style="filter:blur(.8px)">Aa</text><text x="8.3" y="33.6" font-size="27" font-family="Liberation Sans,sans-serif" font-weight="bold" fill="#e8b450" >Aa</text><text x="8.3" y="34.9" font-size="27" font-family="Liberation Sans,sans-serif" font-weight="bold" fill="#3c3c3e" >Aa</text></svg></div>
<div class="pc" style="left:174px;top:627.4px;height:52.5px"><svg width="53" height="53" viewBox="0 0 53 53"><defs><pattern id="gp" width="3" height="3" patternUnits="userSpaceOnUse"><rect width="3" height="3" fill="#4a3c14"/><rect width="2.200" height="2.200" fill="#d8bc5c"/></pattern></defs><text x="6.7" y="36.4" font-size="29" font-family="Liberation Sans,sans-serif" font-weight="bold" fill="#161616" style="filter:blur(.8px)">Aa</text><text x="4.7" y="34.9" font-size="29" font-family="Liberation Sans,sans-serif" font-weight="bold" fill="url(#gp)" >Aa</text></svg></div>
<div class="pc" style="left:231px;top:627.4px;height:52.5px"><svg width="53" height="53" viewBox="0 0 53 53"><g style="filter:blur(.4px)"><path d="M14.8 31.2l4-9 3 3 4-10 3 6 5-5 1 6 5-3-2 7 3 5-4 2-3 6-6-3-5 4-4-5-5 1 2-6z" fill="#1aa8b4"/></g><text x="15.8" y="36.7" font-size="20" font-family="Liberation Sans,sans-serif" font-weight="bold" fill="#22c4cc" stroke="#128a98" stroke-width=".6">Aa</text></svg></div>
<div class="pc" style="left:3px;top:684.6px;height:30px"><svg width="53" height="53" viewBox="0 0 53 53"></svg></div>
<div class="pc" style="left:60px;top:684.6px;height:30px"><svg width="53" height="53" viewBox="0 0 53 53"></svg></div>
<div class="pc" style="left:117px;top:684.6px;height:30px"><svg width="53" height="53" viewBox="0 0 53 53"><rect x="14.500" y="13" width="5" height="2" fill="#f0d8e0"/></svg></div>
<div class="pc" style="left:174px;top:684.6px;height:30px"><svg width="53" height="53" viewBox="0 0 53 53"></svg></div>
<div class="abs" style="left:0;top:699px;width:290px;height:33px;background:#292929;border-top:1px solid #1a1a1a"></div>
<div class="abs" style="left:8px;top:707px;width:100px;height:18px;border-radius:4px;background:linear-gradient(#646464,#5a5a5a);font-size:12px;line-height:18px;padding-left:8px;color:#fff">全部<svg class="abs" style="right:4px;top:2.500px" width="8" height="13" viewBox="0 0 8 13"><path d="M1 5l3-3 3 3M1 8l3 3 3-3" fill="none" stroke="#e8e8e8" stroke-width="1.300" stroke-linecap="round" stroke-linejoin="round"/></svg></div>
<svg class="abs" style="left:201px;top:708px" width="15" height="15" viewBox="0 0 15 15"><rect x="1" y="1" width="13" height="13" rx="2" fill="none" stroke="#fff" stroke-width="1.700"/><path d="M7.500 3.300l1.200 2.700 2.900.3-2.200 2 .6 2.900-2.500-1.500-2.500 1.500.6-2.900-2.200-2 2.900-.3z" fill="#fff"/></svg>
<div class="abs" style="left:220px;top:709px;font-size:12px;line-height:15px;color:#fff;white-space:nowrap;letter-spacing:-.050px">Presets Lab</div>
</div>
<div id="lsep"></div>
<div id="cv">
<style>
.rl{position:absolute;top:670.5px;width:40px;margin-left:-20px;text-align:center;font-size:12.500px;line-height:14px;color:#5a5a5a}
.st{position:absolute;top:708px;font-size:11.600px;line-height:16px;color:#fff;white-space:nowrap}
</style>
<div class="abs" style="left:18px;top:57px;width:596px;height:596px;box-shadow:0 0 0 1px #6a0e08,0 0 2.500px 3px #5a0b06,0 0 6px 4px #2a0402;background:#fff"></div>
<svg class="abs" style="left:4px;top:57px" width="14" height="600" viewBox="0 0 14 600"><path d="M3.500 0.0h10M3.500 59.6h10M3.500 119.2h10M3.500 178.8h10M3.500 238.4h10M3.500 298.0h10M3.500 357.6h10M3.500 417.2h10M3.500 476.8h10M3.500 536.4h10M3.500 596.0h10" stroke="#4a3e3e" stroke-width="1"/><path d="M9.500 3.0h3.500M9.500 6.0h3.500M9.500 8.9h3.500M9.500 11.9h3.500M9.500 14.9h3.500M9.500 17.9h3.500M9.500 20.9h3.500M9.500 23.8h3.500M9.500 26.8h3.500M9.500 29.8h3.500M9.500 32.8h3.500M9.500 35.8h3.500M9.500 38.7h3.500M9.500 41.7h3.500M9.500 44.7h3.500M9.500 47.7h3.500M9.500 50.7h3.500M9.500 53.6h3.500M9.500 56.6h3.500M9.500 62.6h3.500M9.500 65.6h3.500M9.500 68.5h3.500M9.500 71.5h3.500M9.500 74.5h3.500M9.500 77.5h3.500M9.500 80.5h3.500M9.500 83.4h3.500M9.500 86.4h3.500M9.500 89.4h3.500M9.500 92.4h3.500M9.500 95.4h3.500M9.500 98.3h3.500M9.500 101.3h3.500M9.500 104.3h3.500M9.500 107.3h3.500M9.500 110.3h3.500M9.500 113.2h3.500M9.500 116.2h3.500M9.500 122.2h3.500M9.500 125.2h3.500M9.500 128.1h3.500M9.500 131.1h3.500M9.500 134.1h3.500M9.500 137.1h3.500M9.500 140.1h3.500M9.500 143.0h3.500M9.500 146.0h3.500M9.500 149.0h3.500M9.500 152.0h3.500M9.500 155.0h3.500M9.500 157.9h3.500M9.500 160.9h3.500M9.500 163.9h3.500M9.500 166.9h3.500M9.500 169.9h3.500M9.500 172.8h3.500M9.500 175.8h3.500M9.500 181.8h3.500M9.500 184.8h3.500M9.500 187.7h3.500M9.500 190.7h3.500M9.500 193.7h3.500M9.500 196.7h3.500M9.500 199.7h3.500M9.500 202.6h3.500M9.500 205.6h3.500M9.500 208.6h3.500M9.500 211.6h3.500M9.500 214.6h3.500M9.500 217.5h3.500M9.500 220.5h3.500M9.500 223.5h3.500M9.500 226.5h3.500M9.500 229.5h3.500M9.500 232.4h3.500M9.500 235.4h3.500M9.500 241.4h3.500M9.500 244.4h3.500M9.500 247.3h3.500M9.500 250.3h3.500M9.500 253.3h3.500M9.500 256.3h3.500M9.500 259.3h3.500M9.500 262.2h3.500M9.500 265.2h3.500M9.500 268.2h3.500M9.500 271.2h3.500M9.500 274.2h3.500M9.500 277.1h3.500M9.500 280.1h3.500M9.500 283.1h3.500M9.500 286.1h3.500M9.500 289.1h3.500M9.500 292.0h3.500M9.500 295.0h3.500M9.500 301.0h3.500M9.500 304.0h3.500M9.500 306.9h3.500M9.500 309.9h3.500M9.500 312.9h3.500M9.500 315.9h3.500M9.500 318.9h3.500M9.500 321.8h3.500M9.500 324.8h3.500M9.500 327.8h3.500M9.500 330.8h3.500M9.500 333.8h3.500M9.500 336.7h3.500M9.500 339.7h3.500M9.500 342.7h3.500M9.500 345.7h3.500M9.500 348.7h3.500M9.500 351.6h3.500M9.500 354.6h3.500M9.500 360.6h3.500M9.500 363.6h3.500M9.500 366.5h3.500M9.500 369.5h3.500M9.500 372.5h3.500M9.500 375.5h3.500M9.500 378.5h3.500M9.500 381.4h3.500M9.500 384.4h3.500M9.500 387.4h3.500M9.500 390.4h3.500M9.500 393.4h3.500M9.500 396.3h3.500M9.500 399.3h3.500M9.500 402.3h3.500M9.500 405.3h3.500M9.500 408.3h3.500M9.500 411.2h3.500M9.500 414.2h3.500M9.500 420.2h3.500M9.500 423.2h3.500M9.500 426.1h3.500M9.500 429.1h3.500M9.500 432.1h3.500M9.500 435.1h3.500M9.500 438.1h3.500M9.500 441.0h3.500M9.500 444.0h3.500M9.500 447.0h3.500M9.500 450.0h3.500M9.500 453.0h3.500M9.500 455.9h3.500M9.500 458.9h3.500M9.500 461.9h3.500M9.500 464.9h3.500M9.500 467.9h3.500M9.500 470.8h3.500M9.500 473.8h3.500M9.500 479.8h3.500M9.500 482.8h3.500M9.500 485.7h3.500M9.500 488.7h3.500M9.500 491.7h3.500M9.500 494.7h3.500M9.500 497.7h3.500M9.500 500.6h3.500M9.500 503.6h3.500M9.500 506.6h3.500M9.500 509.6h3.500M9.500 512.6h3.500M9.500 515.5h3.500M9.500 518.5h3.500M9.500 521.5h3.500M9.500 524.5h3.500M9.500 527.5h3.500M9.500 530.4h3.500M9.500 533.4h3.500M9.500 539.4h3.500M9.500 542.4h3.500M9.500 545.3h3.500M9.500 548.3h3.500M9.500 551.3h3.500M9.500 554.3h3.500M9.500 557.3h3.500M9.500 560.2h3.500M9.500 563.2h3.500M9.500 566.2h3.500M9.500 569.2h3.500M9.500 572.2h3.500M9.500 575.1h3.500M9.500 578.1h3.500M9.500 581.1h3.500M9.500 584.1h3.500M9.500 587.1h3.500M9.500 590.0h3.500M9.500 593.0h3.500" stroke="#7a2018" stroke-width="1" opacity=".55"/><path d="M9 0v598" stroke="#3c2a2a" stroke-width="1"/></svg>
<div class="abs" style="left:0;top:53px;width:2px;height:30px;background:linear-gradient(#1c3e8a,#2a58c0 50%,#1c3e8a);opacity:.8"></div>
<svg class="abs" style="left:0;top:653px" width="628" height="14" viewBox="0 0 628 14"><path d="M18.0 0v10.500M77.6 0v10.500M137.2 0v10.500M196.8 0v10.500M256.4 0v10.500M316.0 0v10.500M375.6 0v10.500M435.2 0v10.500M494.8 0v10.500M554.4 0v10.500M614.0 0v10.500" stroke="#4a3e3e" stroke-width="1"/><path d="M21.0 1v3.500M24.0 1v3.500M26.9 1v3.500M29.9 1v3.500M32.9 1v3.500M35.9 1v3.500M38.9 1v3.500M41.8 1v3.500M44.8 1v3.500M47.8 1v3.500M50.8 1v3.500M53.8 1v3.500M56.7 1v3.500M59.7 1v3.500M62.7 1v3.500M65.7 1v3.500M68.7 1v3.500M71.6 1v3.500M74.6 1v3.500M80.6 1v3.500M83.6 1v3.500M86.5 1v3.500M89.5 1v3.500M92.5 1v3.500M95.5 1v3.500M98.5 1v3.500M101.4 1v3.500M104.4 1v3.500M107.4 1v3.500M110.4 1v3.500M113.4 1v3.500M116.3 1v3.500M119.3 1v3.500M122.3 1v3.500M125.3 1v3.500M128.3 1v3.500M131.2 1v3.500M134.2 1v3.500M140.2 1v3.500M143.2 1v3.500M146.1 1v3.500M149.1 1v3.500M152.1 1v3.500M155.1 1v3.500M158.1 1v3.500M161.0 1v3.500M164.0 1v3.500M167.0 1v3.500M170.0 1v3.500M173.0 1v3.500M175.9 1v3.500M178.9 1v3.500M181.9 1v3.500M184.9 1v3.500M187.9 1v3.500M190.8 1v3.500M193.8 1v3.500M199.8 1v3.500M202.8 1v3.500M205.7 1v3.500M208.7 1v3.500M211.7 1v3.500M214.7 1v3.500M217.7 1v3.500M220.6 1v3.500M223.6 1v3.500M226.6 1v3.500M229.6 1v3.500M232.6 1v3.500M235.5 1v3.500M238.5 1v3.500M241.5 1v3.500M244.5 1v3.500M247.5 1v3.500M250.4 1v3.500M253.4 1v3.500M259.4 1v3.500M262.4 1v3.500M265.3 1v3.500M268.3 1v3.500M271.3 1v3.500M274.3 1v3.500M277.3 1v3.500M280.2 1v3.500M283.2 1v3.500M286.2 1v3.500M289.2 1v3.500M292.2 1v3.500M295.1 1v3.500M298.1 1v3.500M301.1 1v3.500M304.1 1v3.500M307.1 1v3.500M310.0 1v3.500M313.0 1v3.500M319.0 1v3.500M322.0 1v3.500M324.9 1v3.500M327.9 1v3.500M330.9 1v3.500M333.9 1v3.500M336.9 1v3.500M339.8 1v3.500M342.8 1v3.500M345.8 1v3.500M348.8 1v3.500M351.8 1v3.500M354.7 1v3.500M357.7 1v3.500M360.7 1v3.500M363.7 1v3.500M366.7 1v3.500M369.6 1v3.500M372.6 1v3.500M378.6 1v3.500M381.6 1v3.500M384.5 1v3.500M387.5 1v3.500M390.5 1v3.500M393.5 1v3.500M396.5 1v3.500M399.4 1v3.500M402.4 1v3.500M405.4 1v3.500M408.4 1v3.500M411.4 1v3.500M414.3 1v3.500M417.3 1v3.500M420.3 1v3.500M423.3 1v3.500M426.3 1v3.500M429.2 1v3.500M432.2 1v3.500M438.2 1v3.500M441.2 1v3.500M444.1 1v3.500M447.1 1v3.500M450.1 1v3.500M453.1 1v3.500M456.1 1v3.500M459.0 1v3.500M462.0 1v3.500M465.0 1v3.500M468.0 1v3.500M471.0 1v3.500M473.9 1v3.500M476.9 1v3.500M479.9 1v3.500M482.9 1v3.500M485.9 1v3.500M488.8 1v3.500M491.8 1v3.500M497.8 1v3.500M500.8 1v3.500M503.7 1v3.500M506.7 1v3.500M509.7 1v3.500M512.7 1v3.500M515.7 1v3.500M518.6 1v3.500M521.6 1v3.500M524.6 1v3.500M527.6 1v3.500M530.6 1v3.500M533.5 1v3.500M536.5 1v3.500M539.5 1v3.500M542.5 1v3.500M545.5 1v3.500M548.4 1v3.500M551.4 1v3.500M557.4 1v3.500M560.4 1v3.500M563.3 1v3.500M566.3 1v3.500M569.3 1v3.500M572.3 1v3.500M575.3 1v3.500M578.2 1v3.500M581.2 1v3.500M584.2 1v3.500M587.2 1v3.500M590.2 1v3.500M593.1 1v3.500M596.1 1v3.500M599.1 1v3.500M602.1 1v3.500M605.1 1v3.500M608.0 1v3.500M611.0 1v3.500" stroke="#7a2018" stroke-width="1" opacity=".55"/><path d="M14 5h600" stroke="#3c2a2a" stroke-width="1"/></svg>
<div class="rl" style="left:18.0px">0</div>
<div class="rl" style="left:77.6px">50</div>
<div class="rl" style="left:137.2px">100</div>
<div class="rl" style="left:196.8px">150</div>
<div class="rl" style="left:256.4px">200</div>
<div class="rl" style="left:316.0px">250</div>
<div class="rl" style="left:375.6px">300</div>
<div class="rl" style="left:435.2px">350</div>
<div class="rl" style="left:494.8px">400</div>
<div class="rl" style="left:554.4px">450</div>
<div class="rl" style="left:614.0px">500</div>
<svg class="abs" style="left:18px;top:57px" width="596" height="596" viewBox="309 125 596 596"><defs>
<linearGradient id="abg" gradientUnits="userSpaceOnUse" x1="309" y1="0" x2="905" y2="0"><stop offset="0" stop-color="#dcfeff"/><stop offset=".5" stop-color="#efeffe"/><stop offset="1" stop-color="#ffdffe"/></linearGradient>
<linearGradient id="fg" gradientUnits="userSpaceOnUse" x1="410" y1="0" x2="809" y2="0"><stop offset="0" stop-color="#3fe2f6"/><stop offset=".5" stop-color="#9b92f2"/><stop offset="1" stop-color="#ee46ec"/></linearGradient>
<linearGradient id="sg" gradientUnits="userSpaceOnUse" x1="330" y1="0" x2="890" y2="0"><stop offset="0" stop-color="#35e2f2"/><stop offset=".2" stop-color="#3fdcf2"/><stop offset=".52" stop-color="#8f86ee"/><stop offset=".8" stop-color="#ee52f0"/><stop offset="1" stop-color="#f64df0"/></linearGradient>
<filter id="mb" filterUnits="userSpaceOnUse" x="250" y="540" width="720" height="170"><feGaussianBlur stdDeviation="42 1"/><feComponentTransfer><feFuncA type="linear" slope="1.400"/></feComponentTransfer></filter>
<filter id="selg" filterUnits="userSpaceOnUse" x="405" y="550" width="410" height="115"><feGaussianBlur stdDeviation="2.800"/></filter>
<clipPath id="selo"><path clip-rule="evenodd" d="M400 545h420v125h-420zM425.500 570.500h366v73h-366z"/></clipPath><clipPath id="disc"><circle cx="609.5" cy="345.5" r="198.700"/></clipPath>
</defs><rect x="309" y="125" width="596" height="596" fill="url(#abg)"/><defs><filter id="rm" color-interpolation-filters="sRGB" filterUnits="userSpaceOnUse" x="400" y="136" width="420" height="420"><feComponentTransfer><feFuncR type="table" tableValues="0.000 0.022 0.044 0.066 0.088 0.110 0.132 0.154 0.176 0.198 0.220 0.240 0.260 0.280 0.300 0.320 0.340 0.360 0.380 0.402 0.424 0.446 0.468 0.489 0.511 0.553 0.608 0.662 0.717 0.772 0.812 0.836 0.861 0.885 0.906 0.921 0.936 0.951 0.958 0.966 0.972 0.977 0.980 0.980 0.980 0.980 0.980 0.980 0.980 0.980 0.980"/><feFuncG type="table" tableValues="0.000 0.022 0.044 0.066 0.088 0.110 0.132 0.154 0.176 0.198 0.220 0.240 0.260 0.280 0.300 0.320 0.340 0.360 0.380 0.402 0.424 0.446 0.468 0.489 0.511 0.553 0.608 0.662 0.717 0.772 0.812 0.836 0.861 0.885 0.906 0.921 0.936 0.951 0.958 0.966 0.972 0.977 0.980 0.980 0.980 0.980 0.980 0.980 0.980 0.980 0.980"/><feFuncB type="table" tableValues="0.000 0.022 0.044 0.066 0.088 0.110 0.132 0.154 0.176 0.198 0.220 0.240 0.260 0.280 0.300 0.320 0.340 0.360 0.380 0.402 0.424 0.446 0.468 0.489 0.511 0.553 0.608 0.662 0.717 0.772 0.812 0.836 0.861 0.885 0.906 0.921 0.936 0.951 0.958 0.966 0.972 0.977 0.980 0.980 0.980 0.980 0.980 0.980 0.980 0.980 0.980"/></feComponentTransfer></filter><mask id="pm" maskUnits="userSpaceOnUse" x="400" y="136" width="420" height="420"><g filter="url(#rm)"><rect x="400" y="136" width="420" height="420" fill="#000"/><circle cx="703.6" cy="334.0" r="175" fill="#fff" fill-opacity="0.2"/><circle cx="682.5" cy="253.5" r="174" fill="#fff" fill-opacity="0.2"/><circle cx="598.6" cy="229.0" r="175" fill="#fff" fill-opacity="0.2"/><circle cx="532.5" cy="253.5" r="174" fill="#fff" fill-opacity="0.2"/><circle cx="493.6" cy="334.0" r="175" fill="#fff" fill-opacity="0.2"/><circle cx="532.5" cy="403.5" r="174" fill="#fff" fill-opacity="0.2"/><circle cx="598.6" cy="439.0" r="175" fill="#fff" fill-opacity="0.2"/><circle cx="682.5" cy="403.5" r="174" fill="#fff" fill-opacity="0.2"/></g></mask></defs><circle cx="609.500" cy="345" r="199.200" fill="url(#fg)" mask="url(#pm)"/><path fill-rule="evenodd" d="M410.3 345a199.2 199.2 0 1 0 398.4 0a199.2 199.2 0 1 0 -398.4 0zM421.6 343.85a186.5 186.5 0 1 0 373 0a186.5 186.5 0 1 0 -373 0z" fill="url(#fg)"/><path fill-rule="evenodd" d="M428.25 343.25a178.75 178.75 0 1 0 357.5 0a178.75 178.75 0 1 0 -357.5 0zM440.2 345.2a168.6 168.6 0 1 0 337.2 0a168.6 168.6 0 1 0 -337.2 0z" fill="url(#fg)" fill-opacity=".7"/><circle cx="608.700" cy="340.850" r="84.900" fill="#f2edfd"/><circle cx="608.600" cy="340.850" r="68.600" fill="none" stroke="url(#fg)" stroke-opacity=".86" stroke-width="5.200"/><circle cx="608" cy="339.700" r="58.200" fill="none" stroke="url(#fg)" stroke-opacity=".42" stroke-width="5.400"/><g filter="url(#mb)"><text x="420.400" y="641.700" font-family="Liberation Sans,sans-serif" font-weight="bold" font-size="99.800" letter-spacing="-.300" fill="url(#sg)">Flowers</text><text x="425.300" y="676.600" font-family="Liberation Sans,sans-serif" font-weight="bold" font-size="41" letter-spacing="29.400" fill="url(#sg)">By Irene</text></g><g clip-path="url(#selo)"><rect x="425.500" y="570.500" width="366" height="73" fill="none" stroke="#86c0f8" stroke-width="8" filter="url(#selg)" opacity=".9"/></g><rect x="425.500" y="570.500" width="366" height="73" fill="#fff" fill-opacity=".28" stroke="#9ccdf8" stroke-width="1"/><text x="420.400" y="641.700" font-family="Liberation Sans,sans-serif" font-weight="bold" font-size="99.800" letter-spacing="-.300" fill="#000">Flowers</text><text x="425.300" y="676.600" font-family="Liberation Sans,sans-serif" font-weight="bold" font-size="41" letter-spacing="29.400" fill="#000">By Irene</text><g transform="translate(609 553)"><path d="M-12.500 0H-8.500A8.500 8.500 0 0 1 8.500 0H12.500L7.750 6.500L3 0H4A4 4 0 0 0 -4 0H-3L-7.750 6.500Z" fill="#7d9aa6" stroke="#4f7580" stroke-width="2.600" stroke-linejoin="round" opacity=".75"/><path d="M-12.500 0H-8.500A8.500 8.500 0 0 1 8.500 0H12.500L7.750 6.500L3 0H4A4 4 0 0 0 -4 0H-3L-7.750 6.500Z" fill="#86a3b0" stroke="#d4f2f8" stroke-width="1.300" stroke-linejoin="round"/></g><g transform="translate(809 607)"><path d="M-11.500 0l6-5.500v3.400h11v-3.400l6 5.500-6 5.500v-3.400h-11v3.400z" fill="#7d9aa6" stroke="#7f9aa6" stroke-width="2.400" stroke-linejoin="round" opacity=".55"/><path d="M-11.500 0l6-5.500v3.400h11v-3.400l6 5.500-6 5.500v-3.400h-11v3.400z" fill="#9db9c6" stroke="#e2f6fb" stroke-width="1.200" stroke-linejoin="round"/></g></svg>
<div class="abs" style="left:0;top:699.5px;width:628px;height:33px;background:#000;border-top:1px solid #2c2c2c"></div>
<svg class="abs" style="left:7px;top:708px" width="16" height="16" viewBox="-8 -8 16 16"><g fill="#fff"><rect x="-1.600" y="-7.300" width="3.200" height="4" rx=".5" transform="rotate(0)"/><rect x="-1.600" y="-7.300" width="3.200" height="4" rx=".5" transform="rotate(45)"/><rect x="-1.600" y="-7.300" width="3.200" height="4" rx=".5" transform="rotate(90)"/><rect x="-1.600" y="-7.300" width="3.200" height="4" rx=".5" transform="rotate(135)"/><rect x="-1.600" y="-7.300" width="3.200" height="4" rx=".5" transform="rotate(180)"/><rect x="-1.600" y="-7.300" width="3.200" height="4" rx=".5" transform="rotate(225)"/><rect x="-1.600" y="-7.300" width="3.200" height="4" rx=".5" transform="rotate(270)"/><rect x="-1.600" y="-7.300" width="3.200" height="4" rx=".5" transform="rotate(315)"/></g><circle r="4.700" fill="none" stroke="#fff" stroke-width="2.600"/></svg>
<div class="st" style="left:26px">Canvas</div>
<svg class="abs" style="left:76px;top:708px" width="16" height="16" viewBox="-8 -8 16 16"><circle r="6.300" fill="none" stroke="#fff" stroke-width="1.500"/><circle r="3.900" fill="#fff"/></svg>
<div class="st" style="left:95.5px">Snapping</div>
<svg class="abs" style="left:157px;top:709px" width="14" height="14" viewBox="0 0 14 14"><g fill="#fff"><rect x="0" y="0" width="3.600" height="3.600" rx=".5"/><rect x="0" y="5" width="3.600" height="3.600" rx=".5"/><rect x="0" y="10" width="3.600" height="3.600" rx=".5"/><rect x="5" y="0" width="3.600" height="3.600" rx=".5"/><rect x="5" y="5" width="3.600" height="3.600" rx=".5"/><rect x="5" y="10" width="3.600" height="3.600" rx=".5"/><rect x="10" y="0" width="3.600" height="3.600" rx=".5"/><rect x="10" y="5" width="3.600" height="3.600" rx=".5"/><rect x="10" y="10" width="3.600" height="3.600" rx=".5"/></g></svg>
<div class="st" style="left:175.3px">Grid</div>
<div class="st" style="left:316.5px">Render Mode</div>
<div class="abs" style="left:389px;top:705.7px;width:120px;height:18px;border-radius:4px;background:#3b3b3b;font-size:12px;line-height:17px;padding-left:7px;color:#cfcfcf">Full<svg class="abs" style="right:4px;top:2.500px" width="8" height="13" viewBox="0 0 8 13"><path d="M1 5l3-3 3 3M1 8l3 3 3-3" fill="none" stroke="#d8d8d8" stroke-width="1.300" stroke-linecap="round" stroke-linejoin="round"/></svg></div>
<div class="st" style="left:522px">Zoom</div>
<div class="abs" style="left:555px;top:705.7px;width:64px;height:18px;border-radius:4px;background:#3b3b3b;font-size:11.400px;line-height:17px;padding-left:7px;color:#e0e0e0">119.2 %<svg class="abs" style="right:4px;top:2.500px" width="8" height="13" viewBox="0 0 8 13"><path d="M1 5l3-3 3 3M1 8l3 3 3-3" fill="none" stroke="#d8d8d8" stroke-width="1.300" stroke-linecap="round" stroke-linejoin="round"/></svg></div>
</div>
<div id="rsep"></div>
<div id="right">
<style>
.lb{position:absolute;right:212.5px;font-size:11.500px;line-height:14px;color:#fff;white-space:nowrap;text-align:right}
.fld{position:absolute;height:20.500px;background:#252525;border-radius:3.500px;font-size:13px;line-height:22px;color:#f0f0f0;padding-left:4px}
.px{position:absolute;right:5px;top:0;font-size:10px;color:#777}
.trk{position:absolute;left:128px;width:123px;height:3px;border-radius:1.500px;background:#5a5a5a}
.trk i{position:absolute;left:0;top:0;height:3px;border-radius:1.500px;background:#d0d0d0}
.knob{position:absolute;width:15px;height:15px;border-radius:50%;background:#cdcdcd;box-shadow:0 .5px 1px rgba(0,0,0,.5)}
.val{position:absolute;left:258px;width:53px;height:13px;border-radius:3px;background:#252525;font-size:10px;line-height:13px;text-align:center;color:#f0f0f0}
.sic{position:absolute;top:71.5px;width:44px;margin-left:-22px;text-align:center;font-size:11.500px;line-height:14px;color:#fff;white-space:nowrap}
</style>
<div class="panel" style="top:8px;height:174.5px"><div class="phead">Styles</div></div>
<div class="panel" style="top:191px;height:122px"><div class="phead">文本</div></div>
<div class="panel" style="top:321.5px;height:227px"><div class="phead">通用</div></div>
<div class="panel" style="top:557px;height:195px"><div class="phead">字体</div></div>
<div class="sic" style="left:31px">填充</div>
<div class="sic" style="left:75.2px">边框</div>
<div class="sic" style="left:118.6px">阴影</div>
<div class="sic" style="left:162.8px">效果</div>
<div class="sic" style="left:207px">透视</div>
<div class="sic" style="left:250.7px">生成器</div>
<div class="sic" style="left:294.4px">畸变器</div>
<svg class="abs" style="left:17px;top:41px" width="28" height="28" viewBox="0 0 28 28"><path d="M11 10.500V6.450a4.150 4.150 0 0 1 8.300 0v4" fill="none" stroke="#e6e6e6" stroke-width="1.700"/><path d="M12.400 9.800L25.400 18.600L17.900 25L6.500 15.600Z" fill="#e6e6e6" stroke="#e6e6e6" stroke-width="2.400" stroke-linejoin="round"/><path d="M3.600 15.800c-1.500 2-2.100 3.100-2.100 4a1.900 1.900 0 0 0 3.800 0c0-.9-.5-2.200-1.700-4z" fill="#e6e6e6"/><circle cx="13.300" cy="12.300" r="1.100" fill="#353535"/></svg>
<svg class="abs" style="left:61.2px;top:41px" width="28" height="28" viewBox="0 0 28 28"><rect x="2.500" y="2.500" width="23" height="23" rx="6" fill="none" stroke="#f4f4f4" stroke-width="2.400"/><rect x="6" y="6" width="16" height="16" rx="3" fill="#e6e6e6"/></svg>
<svg class="abs" style="left:104.6px;top:41px" width="28" height="28" viewBox="0 0 28 28"><path d="M8 20l5-4.500h13l-5 4.500z" fill="#8a8a8a" stroke="#9a9a9a" stroke-width=".8"/><rect x="4.500" y="3" width="14" height="21.500" rx="2.500" fill="#353535" stroke="#e6e6e6" stroke-width="2.200"/><path d="M8 20l5-4.500h4.500v4.500z" fill="#6a6a6a"/></svg>
<svg class="abs" style="left:148.8px;top:41px" width="28" height="28" viewBox="0 0 28 28"><path d="M9 5l13.500 18" stroke="#e6e6e6" stroke-width="4.200" stroke-linecap="round"/><path d="M9 5l2.500 3.300" stroke="#8a8a8a" stroke-width="4.200" stroke-linecap="butt"/><path d="M17 1l.8 2.200 2.200.8-2.200.8-.8 2.200-.8-2.200-2.200-.8 2.200-.8z" fill="#e6e6e6"/><path d="M22.500 5l.5 1.300 1.300.5-1.300.5-.5 1.300-.5-1.300-1.300-.5 1.300-.5z" fill="#e6e6e6"/><g stroke="#e6e6e6" stroke-width="1.300"><path d="M5 12v7M1.800 13.800l6.400 3.400M1.800 17.200l6.400-3.400"/></g></svg>
<svg class="abs" style="left:193px;top:41px" width="28" height="28" viewBox="0 0 28 28"><defs><pattern id="ck" width="5.600" height="5.600" patternUnits="userSpaceOnUse"><rect width="5.600" height="5.600" fill="#747474"/><rect width="2.800" height="2.800" fill="#d8d8d8"/><rect x="2.800" y="2.800" width="2.800" height="2.800" fill="#d8d8d8"/></pattern></defs><rect x="2" y="2" width="24" height="24" rx="7" fill="url(#ck)"/></svg>
<svg class="abs" style="left:236.7px;top:41px" width="28" height="28" viewBox="0 0 28 28"><path d="M5 5l17 17" stroke="#e6e6e6" stroke-width="2.200" stroke-linecap="round"/><path d="M3.500 3.500l3 1 1 3" fill="none" stroke="#e6e6e6" stroke-width="2"/><path d="M18 19l3.500 3.500" stroke="#e6e6e6" stroke-width="5" stroke-linecap="round"/><path d="M5.500 22.500L17 11" stroke="#e6e6e6" stroke-width="3.600" stroke-linecap="round"/><path d="M24.800 5.200l-3.300 3.300-2.500-.5-.5-2.500 3.300-3.300a5.200 5.200 0 1 0 3 3z" fill="#e6e6e6"/></svg>
<svg class="abs" style="left:280.4px;top:41px" width="28" height="28" viewBox="0 0 28 28"><text x="14" y="25" text-anchor="middle" font-family="Liberation Serif,serif" font-style="italic" font-weight="bold" font-size="33" fill="#e6e6e6">A</text></svg>
<div class="abs" style="left:9px;top:90px;width:312px;height:1px;background:#4c4c4c"></div>
<div class="abs" style="left:9px;top:120.5px;width:312px;text-align:center;font-size:12px;line-height:16px;color:#7e7e7e;letter-spacing:.340px">No fill, border or effect has been added. Please<br>use the buttons above to add styles.</div>
<div class="lb" style="top:255px">文本</div>
<div class="fld" style="left:128px;top:225px;width:183px;height:75px;font-size:12px;line-height:14px;padding:6px 0 0 9px">Flowers</div>
<div class="lb" style="top:355.4px">不透明度</div>
<div class="trk" style="top:360.9px"><i style="width:115.4px"></i></div>
<div class="knob" style="left:235.9px;top:354.9px"></div>
<div class="val" style="top:355.9px">100</div>
<div class="lb" style="top:379.4px">属性定标</div>
<div class="trk" style="top:384.9px"><i style="width:41px"></i></div>
<div class="knob" style="left:161.5px;top:378.9px"></div>
<div class="val" style="top:379.9px">1</div>
<div class="lb" style="top:406px">对象名称</div>
<div class="fld" style="left:128px;top:403px;width:183px"></div>
<div class="lb" style="top:434px">位置</div>
<div class="fld" style="left:128px;top:431px;width:88px">252<span class="px">px</span></div>
<div class="fld" style="left:223px;top:431px;width:88px">95.8<span class="px">px</span></div>
<div class="lb" style="top:462px">标度</div>
<div class="fld" style="left:128px;top:459px;width:88px">1</div>
<div class="fld" style="left:223px;top:459px;width:88px">1</div>
<div class="lb" style="top:490px">旋转</div>
<div class="fld" style="left:128px;top:487px;width:183px">0</div>
<div class="lb" style="top:518px">修剪</div>
<div class="fld" style="left:128px;top:515px;width:183px">0</div>
<div class="lb" style="top:592px">字体大小</div>
<div class="trk" style="top:597.5px"><i style="width:29.6px"></i></div>
<div class="knob" style="left:150.1px;top:591.5px"></div>
<div class="val" style="top:592.5px">83.33</div>
<div class="abs" style="left:128px;top:620.5px;width:183px;height:20px;border-radius:4px;background:linear-gradient(#6e6e6e,#646464);font-size:12px;line-height:20px;text-align:center;color:#fff">字体与字母...</div>
<div class="lb" style="top:658px">线高</div>
<div class="trk" style="top:663.5px"><i style="width:41px"></i></div>
<div class="knob" style="left:161.5px;top:657.5px"></div>
<div class="val" style="top:658.5px">1</div>
<div class="lb" style="top:682px">足迹</div>
<div class="trk" style="top:687.5px"><i style="width:34.4px"></i></div>
<div class="knob" style="left:154.9px;top:681.5px"></div>
<div class="val" style="top:682.5px">0</div>
<div class="lb" style="top:715px">对齐</div>
<div class="abs" style="left:128px;top:710.5px;width:182px;height:24px;border-radius:4px;background:linear-gradient(#6a6a6a,#5e5e5e);font-size:13px;line-height:22px;padding-left:9px;color:#fff">居中<div class="abs" style="right:0;top:0;width:17px;height:24px;border-radius:0 4px 4px 0;background:linear-gradient(#8a8a8a,#7c7c7c)"><svg class="abs" style="left:4.500px;top:4px" width="8" height="14" viewBox="0 0 8 14"><path d="M1 5l3-3.200 3 3.200M1 9l3 3.200 3-3.200" fill="none" stroke="#fff" stroke-width="1.300" stroke-linecap="round" stroke-linejoin="round"/></svg></div></div>
</div>
<!--ENDRIGHT-->
<div class="cnr" style="left:0;top:0;background:radial-gradient(circle at 100% 100%,transparent 4.300px,#fff 5px)"></div>
<div class="cnr" style="right:0;top:0;background:radial-gradient(circle at 0 100%,transparent 4.300px,#fff 5px)"></div>
<div class="cnr" style="left:0;bottom:0;background:radial-gradient(circle at 100% 0,transparent 4.300px,#fff 5px)"></div>
<div class="cnr" style="right:0;bottom:0;background:radial-gradient(circle at 0 0,transparent 4.300px,#fff 5px)"></div>
</body>
</html>
